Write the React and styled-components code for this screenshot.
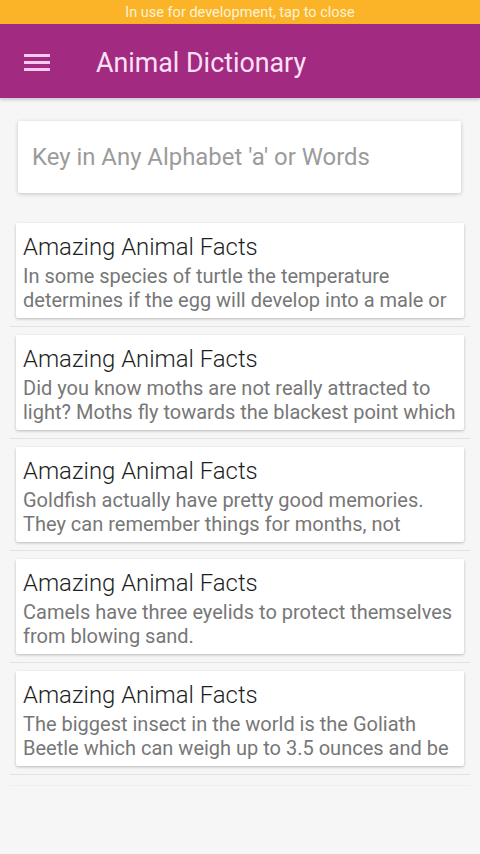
import React from 'react'
import styled, { createGlobalStyle } from 'styled-components'

const facts = [
  'In some species of turtle the temperature determines if the egg will develop into a male or',
  'Did you know moths are not really attracted to light? Moths fly towards the blackest point which',
  'Goldfish actually have pretty good memories. They can remember things for months, not',
  'Camels have three eyelids to protect themselves from blowing sand.',
  'The biggest insect in the world is the Goliath Beetle which can weigh up to 3.5 ounces and be',
]

const App = () => {
  return (
    <Page>
      <GlobalStyle />
      <DevBar>In use for development, tap to close</DevBar>
      <AppBar>
        <MenuButton>
          <svg width="26" height="20" viewBox="0 0 26 20">
            <rect x="0" y="2" width="26" height="3" fill="#f9c9f0" />
            <rect x="0" y="9" width="26" height="3" fill="#f9c9f0" />
            <rect x="0" y="16" width="26" height="3" fill="#f9c9f0" />
          </svg>
        </MenuButton>
        <Title>Animal Dictionary</Title>
      </AppBar>
      <SearchWrap>
        <SearchBox placeholder="Key in Any Alphabet 'a' or Words" />
      </SearchWrap>
      <List>
        {facts.map((text, i) => (
          <Item key={i}>
            <Card>
              <CardTitle>Amazing Animal Facts</CardTitle>
              <CardBody>{text}</CardBody>
            </Card>
          </Item>
        ))}
        <Footer />
      </List>
    </Page>
  )
}
export default App

const GlobalStyle = createGlobalStyle`
  body {
    margin: 0;
    background: #f6f6f6;
    font-family: Roboto, "Noto Sans", sans-serif;
  }
`

const Page = styled.div`
  width: 480px;
  min-height: 854px;
  background: #f6f6f6;
  overflow: hidden;
`

const DevBar = styled.div`
  height: 24px;
  background: #fbb428;
  color: #fdf3d6;
  font-size: 14.5px;
  display: flex;
  align-items: center;
  justify-content: center;
`

const AppBar = styled.div`
  height: 74px;
  background: #a22a80;
  display: flex;
  align-items: center;
  box-shadow: 0 2px 3px rgba(0, 0, 0, 0.18);
`

const MenuButton = styled.div`
  width: 26px;
  margin-left: 24px;
  margin-right: 46px;
  display: flex;
  align-items: center;
  margin-top: 2px;
`

const Title = styled.div`
  color: #fbe1f6;
  font-size: 26.8px;
  margin-top: 3px;
`

const SearchWrap = styled.div`
  padding: 23px 19px 0 18px;
`

const SearchBox = styled.input`
  box-sizing: border-box;
  width: 100%;
  height: 72px;
  border: none;
  border-radius: 2px;
  background: #fff;
  box-shadow: 0 1px 4px rgba(0, 0, 0, 0.2);
  padding: 0 14px;
  font-family: Roboto, sans-serif;
  font-size: 23.9px;
  outline: none;

  &::placeholder {
    color: #9b9b9b;
  }
`

const List = styled.div`
  margin-top: 22px;
  padding: 0 10px;
`

const Item = styled.div`
  padding: 8px 6px 8px 6px;
  border-bottom: 1.5px solid #e3e3e3;
`

const Card = styled.div`
  height: 95px;
  box-sizing: border-box;
  background: #fff;
  border-radius: 2px;
  box-shadow: 0 1px 3px rgba(0, 0, 0, 0.25);
  padding: 10px 7px;
  overflow: hidden;
`

const CardTitle = styled.div`
  font-size: 23.9px;
  font-weight: 300;
  color: #1e1e1e;
  line-height: 28px;
`

const CardBody = styled.div`
  font-size: 20px;
  color: #777;
  line-height: 24px;
  margin-top: 3px;
  display: -webkit-box;
  -webkit-line-clamp: 2;
  -webkit-box-orient: vertical;
  overflow: hidden;
`

const Footer = styled.div`
  height: 10px;
  border-bottom: 1px solid #efefef;
`
